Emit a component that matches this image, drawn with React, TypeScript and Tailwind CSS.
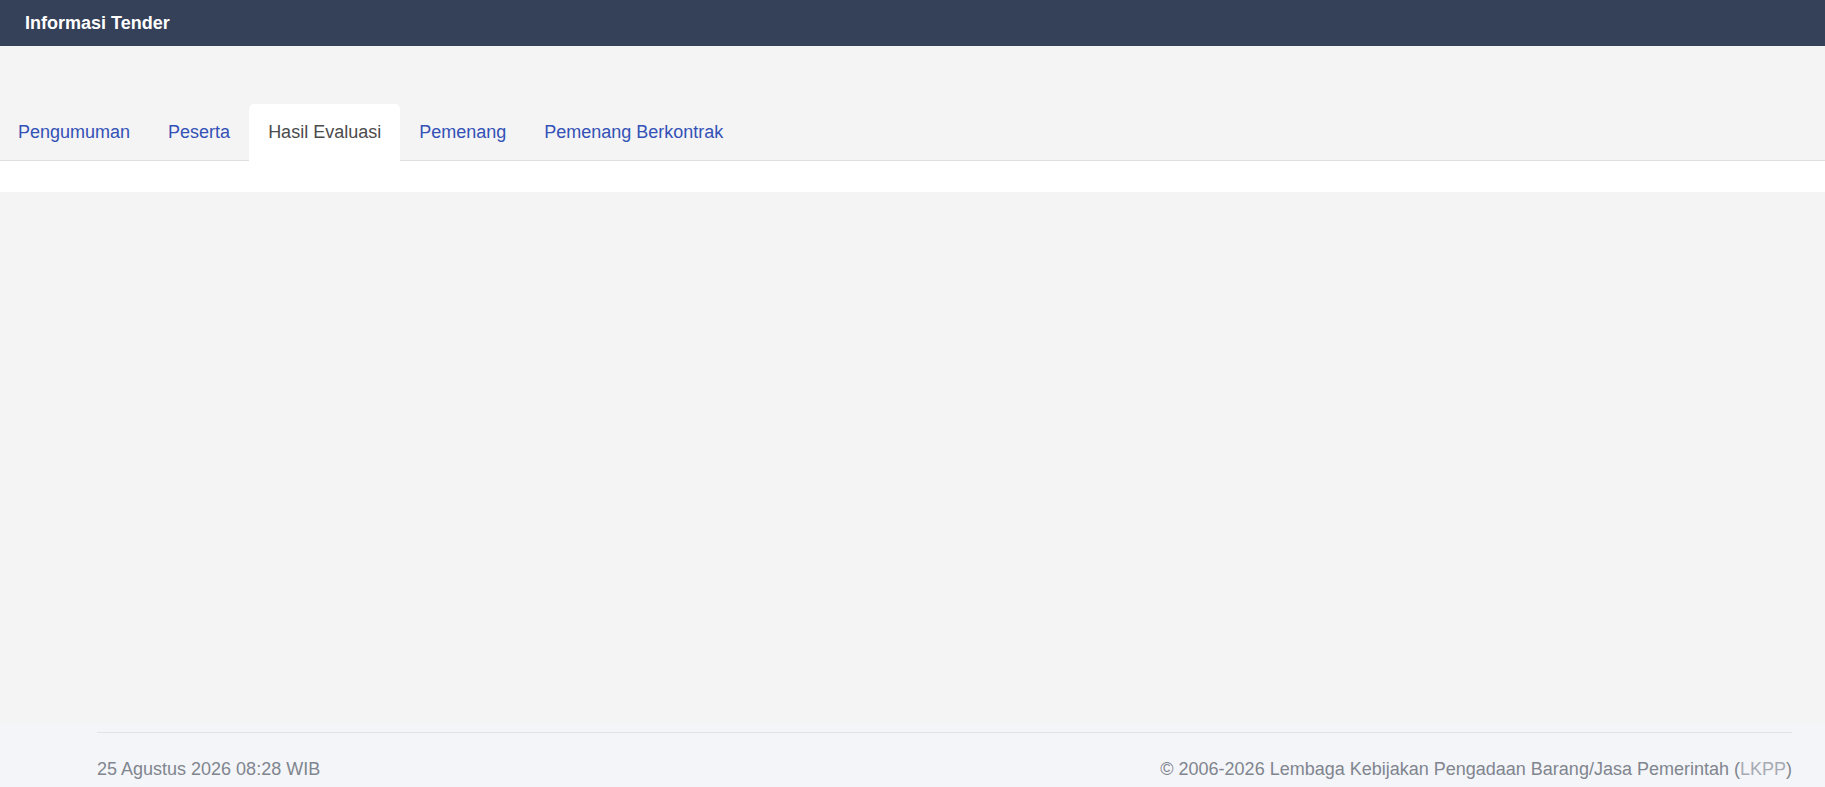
import React from "react";

const tabs = ["Pengumuman", "Peserta", "Hasil Evaluasi", "Pemenang", "Pemenang Berkontrak"];

export default function App() {
  const active = "Hasil Evaluasi";
  return (
    <div
      className="flex min-h-screen flex-col bg-[#f4f4f5]"
      style={{ fontFamily: '"Liberation Sans", Arial, sans-serif' }}
    >
      <header className="flex h-[46px] items-center bg-[#354158] px-[25px]">
        <h1 className="text-[18px] font-bold text-white">Informasi Tender</h1>
      </header>

      <main className="flex-1 pt-[58px]">
        <nav className="flex border-b border-[#dedede] pl-0">
          {tabs.map((t, i) => (
            <div
              key={t}
              className={
                (i === 0 ? "ml-[-1px] " : "") +
                (t === active
                  ? "-mb-px flex h-[57px] items-center rounded-t-[5px] bg-white px-[19px] text-[18px] text-[#4b4b4b]"
                  : "flex h-[56px] items-center px-[19px] text-[18px] text-[#3351b6]")
              }
            >
              {t}
            </div>
          ))}
        </nav>
        <div className="h-[31px] bg-white" />
      </main>

      <footer className="h-[65px] bg-[#f4f5f8] pt-[10px]">
        <div className="ml-[97px] mr-[33px] border-t border-[#dfe3e8] pt-[23px]">
          <div className="flex items-start justify-between text-[18px] text-[#80858f]">
            <span>25 Agustus 2026 08:28 WIB</span>
            <span className="whitespace-nowrap">
              © 2006-2026 Lembaga Kebijakan Pengadaan Barang/Jasa Pemerintah (<span className="text-[#a6abb3]">LKPP</span>)
            </span>
          </div>
        </div>
      </footer>
    </div>
  );
}
